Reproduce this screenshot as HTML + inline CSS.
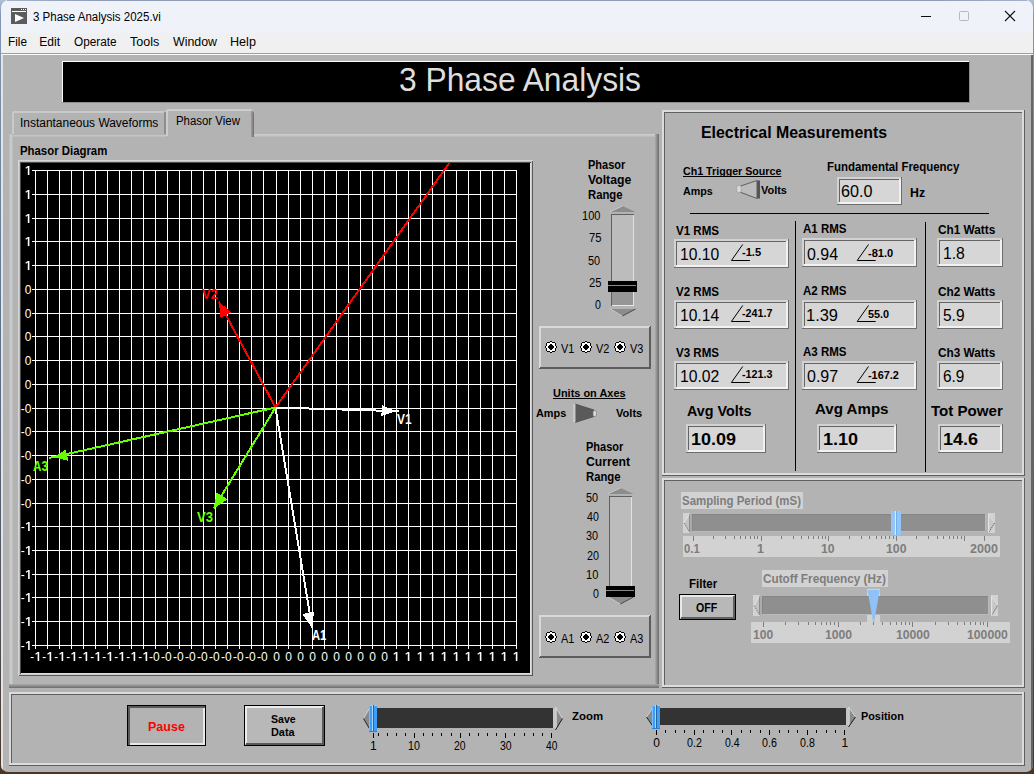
<!DOCTYPE html>
<html><head><meta charset="utf-8"><title>3 Phase Analysis 2025.vi</title>
<style>
html,body{margin:0;padding:0;}
body{width:1034px;height:774px;overflow:hidden;position:relative;background:linear-gradient(180deg,#b0bfd9 0%,#8496b6 2%,#5f7595 40%,#4f5058 80%,#4a3526 100%);font-family:"Liberation Sans",sans-serif;}
.t{position:absolute;white-space:nowrap;transform-origin:0 0;}
#win{position:absolute;left:1px;top:0;width:1032px;height:772px;background:#b3b3b3;border-radius:8px 8px 7px 7px;overflow:hidden;}
svg{position:absolute;left:0;top:0;overflow:visible;}
</style></head><body>
<div id="win"><div style="position:absolute;left:0;top:55px;width:2px;height:717px;background:#e4e4e4"></div><div style="position:absolute;left:1030px;top:55px;width:2px;height:717px;background:#666"></div></div>
<div id="root" style="position:absolute;left:0;top:0;width:1034px;height:774px;">

<div style="position:absolute;left:1px;top:0px;width:1032px;height:33px;background:#eff2f9;border-radius:8px 8px 0 0;"></div>
<div style="position:absolute;left:1px;top:33px;width:1032px;height:21px;background:#f0f0f0;"></div>
<div style="position:absolute;left:7px;top:0px;width:1020px;height:1px;background:linear-gradient(90deg,#a3b1cb,#8d9bb5 10%,#8d9bb5 90%,#a3b1cb);"></div>
<div style="position:absolute;left:1px;top:54px;width:1032px;height:1px;background:#fafafa;"></div>
<div style="position:absolute;left:1px;top:53px;width:1032px;height:1px;background:#a0a0a0;"></div>
<svg width="1034" height="774" viewBox="0 0 1034 774">
<rect x="11" y="8" width="16" height="16" fill="#5b5b5b"/>
<rect x="12" y="11" width="14" height="1" fill="#fff"/>
<rect x="21" y="9" width="1" height="1" fill="#fff"/><rect x="23" y="9" width="1" height="1" fill="#fff"/><rect x="25" y="9" width="1" height="1" fill="#fff"/>
<polygon points="15,14 15,22 24,18" fill="#fff"/>
<path d="M921 16.5h10" stroke="#111" stroke-width="1"/>
<rect x="959.5" y="11.5" width="9" height="9" rx="1" fill="none" stroke="#b8b8bc" stroke-width="1"/>
<path d="M1005 11l10 10M1015 11l-10 10" stroke="#111" stroke-width="1.1"/>
</svg>
<div class="t" style="left:32.67px;top:11px;font-size:12px;line-height:12px;color:#000;transform:scaleX(0.9587);">3 Phase Analysis 2025.vi</div>
<div class="t" style="left:8.36px;top:36px;font-size:12px;line-height:12px;color:#000;transform:scaleX(0.9812);">File</div>
<div class="t" style="left:39.35px;top:36px;font-size:12px;line-height:12px;color:#000;">Edit</div>
<div class="t" style="left:73.76px;top:36px;font-size:12px;line-height:12px;color:#000;transform:scaleX(0.9824);">Operate</div>
<div class="t" style="left:129.97px;top:36px;font-size:12px;line-height:12px;color:#000;transform:scaleX(1.0448);">Tools</div>
<div class="t" style="left:172.84px;top:36px;font-size:12px;line-height:12px;color:#000;transform:scaleX(1.0321);">Window</div>
<div class="t" style="left:230.31px;top:36px;font-size:12px;line-height:12px;color:#000;transform:scaleX(1.0497);">Help</div>
<div style="position:absolute;left:62px;top:61px;width:908px;height:42px;background:#8c8c8c;"></div>
<div style="position:absolute;left:62px;top:61px;width:907px;height:41px;background:#fcfcfc;"></div>
<div style="position:absolute;left:63px;top:62px;width:906px;height:40px;background:#000;"></div>
<div class="t" style="left:399.22px;top:63px;font-size:33px;line-height:33px;color:#dedede;transform:scaleX(0.9629);">3 Phase Analysis</div>
<div style="position:absolute;left:9px;top:134px;width:650px;height:554px;background:#b3b3b3;"></div>
<div style="position:absolute;left:9px;top:134px;width:650px;height:3px;background:linear-gradient(180deg,#d0d0d0,#c4c4c4 60%,#b9b9b9);"></div>
<div style="position:absolute;left:9px;top:134px;width:4px;height:551px;background:linear-gradient(90deg,#b9b9b9,#cbcbcb 40%,#c6c6c6 75%,#b6b6b6);"></div>
<div style="position:absolute;left:655px;top:134px;width:4px;height:554px;background:linear-gradient(90deg,#acacac,#6c6c6c);"></div>
<div style="position:absolute;left:9px;top:684px;width:650px;height:4px;background:linear-gradient(180deg,#acacac,#6c6c6c);"></div>
<div style="position:absolute;left:12px;top:111px;width:154px;height:24px;background:#b3b3b3;border-radius:3px 3px 0 0;"></div>
<div style="position:absolute;left:12px;top:111px;width:154px;height:2px;background:#c9c9c9;border-radius:3px 3px 0 0;"></div>
<div style="position:absolute;left:12px;top:112px;width:2px;height:22px;background:#c9c9c9;"></div>
<div style="position:absolute;left:164px;top:112px;width:2px;height:22px;background:#8e8e8e;"></div>
<div style="position:absolute;left:166px;top:109px;width:88px;height:28px;background:#b3b3b3;border-radius:3px 3px 0 0;"></div>
<div style="position:absolute;left:166px;top:109px;width:86px;height:2px;background:#cdcdcd;border-radius:3px 0 0 0;"></div>
<div style="position:absolute;left:166px;top:110px;width:2px;height:26px;background:#cdcdcd;"></div>
<div style="position:absolute;left:251px;top:111px;width:3px;height:26px;background:linear-gradient(90deg,#a0a0a0,#6e6e6e);border-radius:0 3px 0 0;"></div>
<div class="t" style="left:19.52px;top:117px;font-size:12px;line-height:12px;color:#000;transform:scaleX(0.9956);">Instantaneous Waveforms</div>
<div class="t" style="left:175.78px;top:115px;font-size:12px;line-height:12px;color:#000;transform:scaleX(0.9513);">Phasor View</div>
<div class="t" style="left:19.59px;top:145px;font-size:12px;line-height:12px;color:#000;font-weight:bold;transform:scaleX(0.9484);">Phasor Diagram</div>
<div style="position:absolute;left:18px;top:160px;width:515px;height:516px;background:#000;"></div>
<div style="position:absolute;left:18px;top:160px;width:515px;height:1px;background:#d6d6d6"></div>
<div style="position:absolute;left:18px;top:161px;width:515px;height:1px;background:#bdbdbd"></div>
<div style="position:absolute;left:18px;top:162px;width:515px;height:1px;background:#4c4c4c"></div>
<div style="position:absolute;left:18px;top:160px;width:1px;height:516px;background:#d6d6d6"></div>
<div style="position:absolute;left:19px;top:161px;width:1px;height:515px;background:#bdbdbd"></div>
<div style="position:absolute;left:20px;top:162px;width:1px;height:514px;background:#4c4c4c"></div>
<div style="position:absolute;left:530px;top:163px;width:1px;height:513px;background:#e0e0e0"></div>
<div style="position:absolute;left:531px;top:162px;width:1px;height:514px;background:#cacaca"></div>
<div style="position:absolute;left:532px;top:161px;width:1px;height:515px;background:#5a5a5a"></div>
<div style="position:absolute;left:21px;top:673px;width:510px;height:1px;background:#e0e0e0"></div>
<div style="position:absolute;left:20px;top:674px;width:512px;height:1px;background:#cacaca"></div>
<div style="position:absolute;left:19px;top:675px;width:514px;height:1px;background:#5a5a5a"></div>
<svg width="1034" height="774" viewBox="0 0 1034 774" shape-rendering="crispEdges"><path d="M35.5 170V649M47.5 170V649M59.5 170V649M71.5 170V649M83.5 170V649M95.5 170V649M107.5 170V649M119.5 170V649M131.5 170V649M143.5 170V649M155.5 170V649M167.5 170V649M179.5 170V649M191.5 170V649M203.5 170V649M215.5 170V649M227.5 170V649M239.5 170V649M251.5 170V649M263.5 170V649M276.5 170V649M288.5 170V649M300.5 170V649M312.5 170V649M324.5 170V649M336.5 170V649M348.5 170V649M360.5 170V649M372.5 170V649M384.5 170V649M396.5 170V649M408.5 170V649M420.5 170V649M432.5 170V649M444.5 170V649M456.5 170V649M468.5 170V649M480.5 170V649M492.5 170V649M504.5 170V649M516.5 170V649M32 170.5H517M32 194.5H517M32 218.5H517M32 241.5H517M32 265.5H517M32 289.5H517M32 313.5H517M32 336.5H517M32 360.5H517M32 384.5H517M32 408.5H517M32 431.5H517M32 455.5H517M32 479.5H517M32 503.5H517M32 526.5H517M32 550.5H517M32 574.5H517M32 597.5H517M32 621.5H517M32 645.5H517" stroke="#fff" stroke-width="1" fill="none"/><clipPath id="pc"><rect x="21" y="163" width="509" height="510"/></clipPath><g clip-path="url(#pc)"><line x1="275.5" y1="407.5" x2="501.44000000000005" y2="89.64999999999998" stroke="#ff0000" stroke-width="2"/><line x1="275.5" y1="407.5" x2="218.7" y2="301.5" stroke="#ff0000" stroke-width="2"/><polygon points="218.7,301.5 231.3,312.3 220.7,318.0" fill="#ff0000"/><line x1="275.5" y1="407.5" x2="398.6" y2="411.2" stroke="#ffffff" stroke-width="2"/><polygon points="396.1,411.1 381.4,416.2 381.8,405.2" fill="#ffffff"/><line x1="275.5" y1="407.5" x2="312.1" y2="628" stroke="#ffffff" stroke-width="2"/><polygon points="312.1,628.0 302.2,613.9 314.0,612.0" fill="#ffffff"/><line x1="275.5" y1="407.5" x2="49.2" y2="458" stroke="#66ff00" stroke-width="2"/><polygon points="53.1,457.1 65.8,449.7 68.3,460.9" fill="#66ff00"/><line x1="275.5" y1="407.5" x2="213.7" y2="508.4" stroke="#66ff00" stroke-width="2"/><polygon points="213.7,508.4 216.6,492.6 227.5,499.3" fill="#66ff00"/></g></svg>
<div class="t" style="left:202.35px;top:287px;font-size:14px;line-height:14px;color:#ff0000;font-weight:bold;transform:scaleX(0.9310);">V2</div>
<div class="t" style="left:397.35px;top:412px;font-size:14px;line-height:14px;color:#ffffff;font-weight:bold;transform:scaleX(0.8486);">V1</div>
<div class="t" style="left:311.53px;top:628px;font-size:14px;line-height:14px;color:#ffffff;font-weight:bold;transform:scaleX(0.7997);">A1</div>
<div class="t" style="left:33.42px;top:459px;font-size:14px;line-height:14px;color:#66ff00;font-weight:bold;transform:scaleX(0.8400);">A3</div>
<div class="t" style="left:197.44px;top:510px;font-size:14px;line-height:14px;color:#66ff00;font-weight:bold;transform:scaleX(0.9369);">V3</div>
<div class="t" style="left:24.67px;top:284px;font-size:12px;line-height:12px;color:#fff;">0</div>
<div class="t" style="left:24.67px;top:308px;font-size:12px;line-height:12px;color:#fff;">0</div>
<div class="t" style="left:24.67px;top:331px;font-size:12px;line-height:12px;color:#fff;">0</div>
<div class="t" style="left:24.67px;top:355px;font-size:12px;line-height:12px;color:#fff;">0</div>
<div class="t" style="left:24.67px;top:379px;font-size:12px;line-height:12px;color:#fff;">0</div>
<div class="t" style="left:20.67px;top:403px;font-size:12px;line-height:12px;color:#fff;">-0</div>
<div class="t" style="left:20.67px;top:426px;font-size:12px;line-height:12px;color:#fff;">-0</div>
<div class="t" style="left:20.67px;top:450px;font-size:12px;line-height:12px;color:#fff;">-0</div>
<div class="t" style="left:20.67px;top:474px;font-size:12px;line-height:12px;color:#fff;">-0</div>
<div class="t" style="left:20.67px;top:498px;font-size:12px;line-height:12px;color:#fff;">-0</div>
<div class="t" style="left:149.11px;top:651px;font-size:12px;line-height:12px;color:#fff;">-0</div>
<div class="t" style="left:161.11px;top:651px;font-size:12px;line-height:12px;color:#fff;">-0</div>
<div class="t" style="left:173.11px;top:651px;font-size:12px;line-height:12px;color:#fff;">-0</div>
<div class="t" style="left:185.11px;top:651px;font-size:12px;line-height:12px;color:#fff;">-0</div>
<div class="t" style="left:197.11px;top:651px;font-size:12px;line-height:12px;color:#fff;">-0</div>
<div class="t" style="left:209.11px;top:651px;font-size:12px;line-height:12px;color:#fff;">-0</div>
<div class="t" style="left:221.11px;top:651px;font-size:12px;line-height:12px;color:#fff;">-0</div>
<div class="t" style="left:233.11px;top:651px;font-size:12px;line-height:12px;color:#fff;">-0</div>
<div class="t" style="left:245.11px;top:651px;font-size:12px;line-height:12px;color:#fff;">-0</div>
<div class="t" style="left:257.11px;top:651px;font-size:12px;line-height:12px;color:#fff;">-0</div>
<div class="t" style="left:273.13px;top:651px;font-size:12px;line-height:12px;color:#fff;">0</div>
<div class="t" style="left:285.13px;top:651px;font-size:12px;line-height:12px;color:#fff;">0</div>
<div class="t" style="left:297.13px;top:651px;font-size:12px;line-height:12px;color:#fff;">0</div>
<div class="t" style="left:309.13px;top:651px;font-size:12px;line-height:12px;color:#fff;">0</div>
<div class="t" style="left:321.13px;top:651px;font-size:12px;line-height:12px;color:#fff;">0</div>
<div class="t" style="left:333.13px;top:651px;font-size:12px;line-height:12px;color:#fff;">0</div>
<div class="t" style="left:345.13px;top:651px;font-size:12px;line-height:12px;color:#fff;">0</div>
<div class="t" style="left:357.13px;top:651px;font-size:12px;line-height:12px;color:#fff;">0</div>
<div class="t" style="left:369.13px;top:651px;font-size:12px;line-height:12px;color:#fff;">0</div>
<div class="t" style="left:381.13px;top:651px;font-size:12px;line-height:12px;color:#fff;">0</div>
<svg width="1034" height="774" viewBox="0 0 1034 774" fill="#fff"><rect x="27.80" y="166" width="1.6" height="9"/><path d="M25.70 168.3L28.30 166.5" stroke="#fff" stroke-width="1.1" fill="none"/><rect x="27.80" y="190" width="1.6" height="9"/><path d="M25.70 192.3L28.30 190.5" stroke="#fff" stroke-width="1.1" fill="none"/><rect x="27.80" y="214" width="1.6" height="9"/><path d="M25.70 216.3L28.30 214.5" stroke="#fff" stroke-width="1.1" fill="none"/><rect x="27.80" y="237" width="1.6" height="9"/><path d="M25.70 239.3L28.30 237.5" stroke="#fff" stroke-width="1.1" fill="none"/><rect x="27.80" y="261" width="1.6" height="9"/><path d="M25.70 263.3L28.30 261.5" stroke="#fff" stroke-width="1.1" fill="none"/><rect x="28.10" y="522" width="1.6" height="9"/><path d="M26.00 524.3L28.60 522.5" stroke="#fff" stroke-width="1.1" fill="none"/><rect x="21.30" y="527" width="3" height="1.1"/><rect x="28.10" y="546" width="1.6" height="9"/><path d="M26.00 548.3L28.60 546.5" stroke="#fff" stroke-width="1.1" fill="none"/><rect x="21.30" y="551" width="3" height="1.1"/><rect x="28.10" y="570" width="1.6" height="9"/><path d="M26.00 572.3L28.60 570.5" stroke="#fff" stroke-width="1.1" fill="none"/><rect x="21.30" y="575" width="3" height="1.1"/><rect x="28.10" y="593" width="1.6" height="9"/><path d="M26.00 595.3L28.60 593.5" stroke="#fff" stroke-width="1.1" fill="none"/><rect x="21.30" y="598" width="3" height="1.1"/><rect x="28.10" y="617" width="1.6" height="9"/><path d="M26.00 619.3L28.60 617.5" stroke="#fff" stroke-width="1.1" fill="none"/><rect x="21.30" y="622" width="3" height="1.1"/><rect x="28.10" y="641" width="1.6" height="9"/><path d="M26.00 643.3L28.60 641.5" stroke="#fff" stroke-width="1.1" fill="none"/><rect x="21.30" y="646" width="3" height="1.1"/><rect x="37.60" y="652" width="1.6" height="9"/><path d="M35.50 654.3L38.10 652.5" stroke="#fff" stroke-width="1.1" fill="none"/><rect x="30.70" y="657" width="3" height="1.1"/><rect x="49.60" y="652" width="1.6" height="9"/><path d="M47.50 654.3L50.10 652.5" stroke="#fff" stroke-width="1.1" fill="none"/><rect x="42.70" y="657" width="3" height="1.1"/><rect x="61.60" y="652" width="1.6" height="9"/><path d="M59.50 654.3L62.10 652.5" stroke="#fff" stroke-width="1.1" fill="none"/><rect x="54.70" y="657" width="3" height="1.1"/><rect x="73.60" y="652" width="1.6" height="9"/><path d="M71.50 654.3L74.10 652.5" stroke="#fff" stroke-width="1.1" fill="none"/><rect x="66.70" y="657" width="3" height="1.1"/><rect x="85.60" y="652" width="1.6" height="9"/><path d="M83.50 654.3L86.10 652.5" stroke="#fff" stroke-width="1.1" fill="none"/><rect x="78.70" y="657" width="3" height="1.1"/><rect x="97.60" y="652" width="1.6" height="9"/><path d="M95.50 654.3L98.10 652.5" stroke="#fff" stroke-width="1.1" fill="none"/><rect x="90.70" y="657" width="3" height="1.1"/><rect x="109.60" y="652" width="1.6" height="9"/><path d="M107.50 654.3L110.10 652.5" stroke="#fff" stroke-width="1.1" fill="none"/><rect x="102.70" y="657" width="3" height="1.1"/><rect x="121.60" y="652" width="1.6" height="9"/><path d="M119.50 654.3L122.10 652.5" stroke="#fff" stroke-width="1.1" fill="none"/><rect x="114.70" y="657" width="3" height="1.1"/><rect x="133.60" y="652" width="1.6" height="9"/><path d="M131.50 654.3L134.10 652.5" stroke="#fff" stroke-width="1.1" fill="none"/><rect x="126.70" y="657" width="3" height="1.1"/><rect x="145.60" y="652" width="1.6" height="9"/><path d="M143.50 654.3L146.10 652.5" stroke="#fff" stroke-width="1.1" fill="none"/><rect x="138.70" y="657" width="3" height="1.1"/><rect x="395.80" y="652" width="1.6" height="9"/><path d="M393.70 654.3L396.30 652.5" stroke="#fff" stroke-width="1.1" fill="none"/><rect x="407.80" y="652" width="1.6" height="9"/><path d="M405.70 654.3L408.30 652.5" stroke="#fff" stroke-width="1.1" fill="none"/><rect x="419.80" y="652" width="1.6" height="9"/><path d="M417.70 654.3L420.30 652.5" stroke="#fff" stroke-width="1.1" fill="none"/><rect x="431.80" y="652" width="1.6" height="9"/><path d="M429.70 654.3L432.30 652.5" stroke="#fff" stroke-width="1.1" fill="none"/><rect x="443.80" y="652" width="1.6" height="9"/><path d="M441.70 654.3L444.30 652.5" stroke="#fff" stroke-width="1.1" fill="none"/><rect x="455.80" y="652" width="1.6" height="9"/><path d="M453.70 654.3L456.30 652.5" stroke="#fff" stroke-width="1.1" fill="none"/><rect x="467.80" y="652" width="1.6" height="9"/><path d="M465.70 654.3L468.30 652.5" stroke="#fff" stroke-width="1.1" fill="none"/><rect x="479.80" y="652" width="1.6" height="9"/><path d="M477.70 654.3L480.30 652.5" stroke="#fff" stroke-width="1.1" fill="none"/><rect x="491.80" y="652" width="1.6" height="9"/><path d="M489.70 654.3L492.30 652.5" stroke="#fff" stroke-width="1.1" fill="none"/><rect x="503.80" y="652" width="1.6" height="9"/><path d="M501.70 654.3L504.30 652.5" stroke="#fff" stroke-width="1.1" fill="none"/><rect x="515.80" y="652" width="1.6" height="9"/><path d="M513.70 654.3L516.30 652.5" stroke="#fff" stroke-width="1.1" fill="none"/></svg>
<div class="t" style="left:587.60px;top:159px;font-size:12px;line-height:12px;color:#000;font-weight:bold;transform:scaleX(0.9170);">Phasor</div>
<div class="t" style="left:587.97px;top:174px;font-size:12px;line-height:12px;color:#000;font-weight:bold;transform:scaleX(1.0169);">Voltage</div>
<div class="t" style="left:587.59px;top:189px;font-size:12px;line-height:12px;color:#000;font-weight:bold;transform:scaleX(0.9411);">Range</div>
<svg width="1034" height="774" viewBox="0 0 1034 774"><polygon points="622.5,206 635.5,212 609.5,212" fill="#8c8c8c"/><path d="M609.5 212L622.5 206" stroke="#c8c8c8" stroke-width="1" fill="none"/><polygon points="610.5,309 635.5,309 622.5,316" fill="#8c8c8c"/><path d="M635.5 309L622.5 316" stroke="#4a4a4a" stroke-width="1" fill="none"/><path d="M609.5 308.5L622.0 316" stroke="#c9c9c9" stroke-width="1" fill="none"/></svg>
<div style="position:absolute;left:611px;top:214px;width:23px;height:92px;background:#bcbcbc;"></div>
<div style="position:absolute;left:611px;top:281px;width:23px;height:25px;background:#969696;"></div>
<div style="position:absolute;left:611px;top:214px;width:23px;height:1px;background:#606060"></div>
<div style="position:absolute;left:611px;top:214px;width:1px;height:92px;background:#606060"></div>
<div style="position:absolute;left:633px;top:215px;width:1px;height:91px;background:#e2e2e2"></div>
<div style="position:absolute;left:612px;top:305px;width:22px;height:1px;background:#e8e8e8"></div>
<div style="position:absolute;left:608px;top:281px;width:29px;height:11px;background:#000;"></div>
<div style="position:absolute;left:608px;top:285px;width:28px;height:1px;background:#8a8a8a;"></div>
<div class="t" style="left:582.36px;top:210px;font-size:12px;line-height:12px;color:#000;transform:scaleX(0.9200);">100</div>
<div class="t" style="left:588.54px;top:232px;font-size:12px;line-height:12px;color:#000;transform:scaleX(0.9332);">75</div>
<div class="t" style="left:588.46px;top:255px;font-size:12px;line-height:12px;color:#000;transform:scaleX(0.9063);">50</div>
<div class="t" style="left:588.54px;top:277px;font-size:12px;line-height:12px;color:#000;transform:scaleX(0.9332);">25</div>
<div class="t" style="left:594.71px;top:299px;font-size:12px;line-height:12px;color:#000;transform:scaleX(0.8864);">0</div>
<div class="t" style="left:585.60px;top:441px;font-size:12px;line-height:12px;color:#000;font-weight:bold;transform:scaleX(0.9170);">Phasor</div>
<div class="t" style="left:585.81px;top:456px;font-size:12px;line-height:12px;color:#000;font-weight:bold;transform:scaleX(1.0187);">Current</div>
<div class="t" style="left:585.59px;top:471px;font-size:12px;line-height:12px;color:#000;font-weight:bold;transform:scaleX(0.9411);">Range</div>
<svg width="1034" height="774" viewBox="0 0 1034 774"><polygon points="620.5,488 633.5,494 607.5,494" fill="#8c8c8c"/><path d="M607.5 494L620.5 488" stroke="#c8c8c8" stroke-width="1" fill="none"/><polygon points="608.5,597 633.5,597 620.5,604" fill="#8c8c8c"/><path d="M633.5 597L620.5 604" stroke="#4a4a4a" stroke-width="1" fill="none"/><path d="M607.5 596.5L620.0 604" stroke="#c9c9c9" stroke-width="1" fill="none"/></svg>
<div style="position:absolute;left:609px;top:496px;width:23px;height:98px;background:#bcbcbc;"></div>
<div style="position:absolute;left:609px;top:586px;width:23px;height:8px;background:#969696;"></div>
<div style="position:absolute;left:609px;top:496px;width:23px;height:1px;background:#606060"></div>
<div style="position:absolute;left:609px;top:496px;width:1px;height:98px;background:#606060"></div>
<div style="position:absolute;left:631px;top:497px;width:1px;height:97px;background:#e2e2e2"></div>
<div style="position:absolute;left:610px;top:593px;width:22px;height:1px;background:#e8e8e8"></div>
<div style="position:absolute;left:606px;top:586px;width:29px;height:11px;background:#000;"></div>
<div style="position:absolute;left:606px;top:590px;width:28px;height:1px;background:#8a8a8a;"></div>
<div class="t" style="left:586.46px;top:492px;font-size:12px;line-height:12px;color:#000;transform:scaleX(0.9063);">50</div>
<div class="t" style="left:586.78px;top:511px;font-size:12px;line-height:12px;color:#000;transform:scaleX(0.8827);">40</div>
<div class="t" style="left:586.49px;top:530px;font-size:12px;line-height:12px;color:#000;transform:scaleX(0.9041);">30</div>
<div class="t" style="left:586.55px;top:550px;font-size:12px;line-height:12px;color:#000;transform:scaleX(0.8997);">20</div>
<div class="t" style="left:586.25px;top:569px;font-size:12px;line-height:12px;color:#000;transform:scaleX(0.9220);">10</div>
<div class="t" style="left:592.71px;top:588px;font-size:12px;line-height:12px;color:#000;transform:scaleX(0.8864);">0</div>
<div style="position:absolute;left:539px;top:326px;width:112px;height:43px;background:#b3b3b3"></div>
<div style="position:absolute;left:539px;top:326px;width:111px;height:2px;background:#d9d9d9"></div>
<div style="position:absolute;left:539px;top:326px;width:2px;height:42px;background:#d9d9d9"></div>
<div style="position:absolute;left:540px;top:367px;width:111px;height:2px;background:#5c5c5c"></div>
<div style="position:absolute;left:649px;top:327px;width:2px;height:42px;background:#5c5c5c"></div>
<div style="position:absolute;left:539px;top:368px;width:1px;height:1px;background:#5c5c5c"></div>
<div style="position:absolute;left:650px;top:326px;width:1px;height:1px;background:#5c5c5c"></div>
<svg width="1034" height="774" viewBox="0 0 1034 774" shape-rendering="crispEdges"><rect x="550" y="342" width="2" height="1" fill="#fff"/><rect x="547" y="343" width="8" height="1" fill="#fff"/><rect x="547" y="344" width="8" height="1" fill="#fff"/><rect x="547" y="345" width="8" height="1" fill="#fff"/><rect x="546" y="346" width="10" height="1" fill="#fff"/><rect x="546" y="347" width="10" height="1" fill="#fff"/><rect x="547" y="348" width="8" height="1" fill="#fff"/><rect x="547" y="349" width="8" height="1" fill="#fff"/><rect x="547" y="350" width="8" height="1" fill="#fff"/><rect x="550" y="351" width="2" height="1" fill="#fff"/><rect x="550" y="341" width="2" height="1" fill="#000"/><rect x="547" y="342" width="3" height="1" fill="#000"/><rect x="552" y="342" width="3" height="1" fill="#000"/><rect x="546" y="343" width="1" height="1" fill="#000"/><rect x="555" y="343" width="1" height="1" fill="#000"/><rect x="546" y="344" width="1" height="1" fill="#000"/><rect x="555" y="344" width="1" height="1" fill="#000"/><rect x="546" y="345" width="1" height="1" fill="#000"/><rect x="555" y="345" width="1" height="1" fill="#000"/><rect x="545" y="346" width="1" height="1" fill="#000"/><rect x="556" y="346" width="1" height="1" fill="#000"/><rect x="545" y="347" width="1" height="1" fill="#000"/><rect x="556" y="347" width="1" height="1" fill="#000"/><rect x="546" y="348" width="1" height="1" fill="#000"/><rect x="555" y="348" width="1" height="1" fill="#000"/><rect x="546" y="349" width="1" height="1" fill="#000"/><rect x="555" y="349" width="1" height="1" fill="#000"/><rect x="546" y="350" width="1" height="1" fill="#000"/><rect x="555" y="350" width="1" height="1" fill="#000"/><rect x="547" y="351" width="3" height="1" fill="#000"/><rect x="552" y="351" width="3" height="1" fill="#000"/><rect x="550" y="352" width="2" height="1" fill="#000"/><rect x="550" y="344" width="2" height="1" fill="#000"/><rect x="549" y="345" width="4" height="1" fill="#000"/><rect x="548" y="346" width="6" height="1" fill="#000"/><rect x="548" y="347" width="6" height="1" fill="#000"/><rect x="549" y="348" width="4" height="1" fill="#000"/><rect x="550" y="349" width="2" height="1" fill="#000"/><rect x="585" y="342" width="2" height="1" fill="#fff"/><rect x="582" y="343" width="8" height="1" fill="#fff"/><rect x="582" y="344" width="8" height="1" fill="#fff"/><rect x="582" y="345" width="8" height="1" fill="#fff"/><rect x="581" y="346" width="10" height="1" fill="#fff"/><rect x="581" y="347" width="10" height="1" fill="#fff"/><rect x="582" y="348" width="8" height="1" fill="#fff"/><rect x="582" y="349" width="8" height="1" fill="#fff"/><rect x="582" y="350" width="8" height="1" fill="#fff"/><rect x="585" y="351" width="2" height="1" fill="#fff"/><rect x="585" y="341" width="2" height="1" fill="#000"/><rect x="582" y="342" width="3" height="1" fill="#000"/><rect x="587" y="342" width="3" height="1" fill="#000"/><rect x="581" y="343" width="1" height="1" fill="#000"/><rect x="590" y="343" width="1" height="1" fill="#000"/><rect x="581" y="344" width="1" height="1" fill="#000"/><rect x="590" y="344" width="1" height="1" fill="#000"/><rect x="581" y="345" width="1" height="1" fill="#000"/><rect x="590" y="345" width="1" height="1" fill="#000"/><rect x="580" y="346" width="1" height="1" fill="#000"/><rect x="591" y="346" width="1" height="1" fill="#000"/><rect x="580" y="347" width="1" height="1" fill="#000"/><rect x="591" y="347" width="1" height="1" fill="#000"/><rect x="581" y="348" width="1" height="1" fill="#000"/><rect x="590" y="348" width="1" height="1" fill="#000"/><rect x="581" y="349" width="1" height="1" fill="#000"/><rect x="590" y="349" width="1" height="1" fill="#000"/><rect x="581" y="350" width="1" height="1" fill="#000"/><rect x="590" y="350" width="1" height="1" fill="#000"/><rect x="582" y="351" width="3" height="1" fill="#000"/><rect x="587" y="351" width="3" height="1" fill="#000"/><rect x="585" y="352" width="2" height="1" fill="#000"/><rect x="585" y="344" width="2" height="1" fill="#000"/><rect x="584" y="345" width="4" height="1" fill="#000"/><rect x="583" y="346" width="6" height="1" fill="#000"/><rect x="583" y="347" width="6" height="1" fill="#000"/><rect x="584" y="348" width="4" height="1" fill="#000"/><rect x="585" y="349" width="2" height="1" fill="#000"/><rect x="619" y="342" width="2" height="1" fill="#fff"/><rect x="616" y="343" width="8" height="1" fill="#fff"/><rect x="616" y="344" width="8" height="1" fill="#fff"/><rect x="616" y="345" width="8" height="1" fill="#fff"/><rect x="615" y="346" width="10" height="1" fill="#fff"/><rect x="615" y="347" width="10" height="1" fill="#fff"/><rect x="616" y="348" width="8" height="1" fill="#fff"/><rect x="616" y="349" width="8" height="1" fill="#fff"/><rect x="616" y="350" width="8" height="1" fill="#fff"/><rect x="619" y="351" width="2" height="1" fill="#fff"/><rect x="619" y="341" width="2" height="1" fill="#000"/><rect x="616" y="342" width="3" height="1" fill="#000"/><rect x="621" y="342" width="3" height="1" fill="#000"/><rect x="615" y="343" width="1" height="1" fill="#000"/><rect x="624" y="343" width="1" height="1" fill="#000"/><rect x="615" y="344" width="1" height="1" fill="#000"/><rect x="624" y="344" width="1" height="1" fill="#000"/><rect x="615" y="345" width="1" height="1" fill="#000"/><rect x="624" y="345" width="1" height="1" fill="#000"/><rect x="614" y="346" width="1" height="1" fill="#000"/><rect x="625" y="346" width="1" height="1" fill="#000"/><rect x="614" y="347" width="1" height="1" fill="#000"/><rect x="625" y="347" width="1" height="1" fill="#000"/><rect x="615" y="348" width="1" height="1" fill="#000"/><rect x="624" y="348" width="1" height="1" fill="#000"/><rect x="615" y="349" width="1" height="1" fill="#000"/><rect x="624" y="349" width="1" height="1" fill="#000"/><rect x="615" y="350" width="1" height="1" fill="#000"/><rect x="624" y="350" width="1" height="1" fill="#000"/><rect x="616" y="351" width="3" height="1" fill="#000"/><rect x="621" y="351" width="3" height="1" fill="#000"/><rect x="619" y="352" width="2" height="1" fill="#000"/><rect x="619" y="344" width="2" height="1" fill="#000"/><rect x="618" y="345" width="4" height="1" fill="#000"/><rect x="617" y="346" width="6" height="1" fill="#000"/><rect x="617" y="347" width="6" height="1" fill="#000"/><rect x="618" y="348" width="4" height="1" fill="#000"/><rect x="619" y="349" width="2" height="1" fill="#000"/></svg>
<div class="t" style="left:560.89px;top:343px;font-size:12px;line-height:12px;color:#000;transform:scaleX(0.9080);">V1</div>
<div class="t" style="left:595.89px;top:343px;font-size:12px;line-height:12px;color:#000;transform:scaleX(0.9100);">V2</div>
<div class="t" style="left:630.19px;top:343px;font-size:12px;line-height:12px;color:#000;transform:scaleX(0.9080);">V3</div>
<div style="position:absolute;left:539px;top:615px;width:112px;height:43px;background:#b3b3b3"></div>
<div style="position:absolute;left:539px;top:615px;width:111px;height:2px;background:#d9d9d9"></div>
<div style="position:absolute;left:539px;top:615px;width:2px;height:42px;background:#d9d9d9"></div>
<div style="position:absolute;left:540px;top:656px;width:111px;height:2px;background:#5c5c5c"></div>
<div style="position:absolute;left:649px;top:616px;width:2px;height:42px;background:#5c5c5c"></div>
<div style="position:absolute;left:539px;top:657px;width:1px;height:1px;background:#5c5c5c"></div>
<div style="position:absolute;left:650px;top:615px;width:1px;height:1px;background:#5c5c5c"></div>
<svg width="1034" height="774" viewBox="0 0 1034 774" shape-rendering="crispEdges"><rect x="550" y="632" width="2" height="1" fill="#fff"/><rect x="547" y="633" width="8" height="1" fill="#fff"/><rect x="547" y="634" width="8" height="1" fill="#fff"/><rect x="547" y="635" width="8" height="1" fill="#fff"/><rect x="546" y="636" width="10" height="1" fill="#fff"/><rect x="546" y="637" width="10" height="1" fill="#fff"/><rect x="547" y="638" width="8" height="1" fill="#fff"/><rect x="547" y="639" width="8" height="1" fill="#fff"/><rect x="547" y="640" width="8" height="1" fill="#fff"/><rect x="550" y="641" width="2" height="1" fill="#fff"/><rect x="550" y="631" width="2" height="1" fill="#000"/><rect x="547" y="632" width="3" height="1" fill="#000"/><rect x="552" y="632" width="3" height="1" fill="#000"/><rect x="546" y="633" width="1" height="1" fill="#000"/><rect x="555" y="633" width="1" height="1" fill="#000"/><rect x="546" y="634" width="1" height="1" fill="#000"/><rect x="555" y="634" width="1" height="1" fill="#000"/><rect x="546" y="635" width="1" height="1" fill="#000"/><rect x="555" y="635" width="1" height="1" fill="#000"/><rect x="545" y="636" width="1" height="1" fill="#000"/><rect x="556" y="636" width="1" height="1" fill="#000"/><rect x="545" y="637" width="1" height="1" fill="#000"/><rect x="556" y="637" width="1" height="1" fill="#000"/><rect x="546" y="638" width="1" height="1" fill="#000"/><rect x="555" y="638" width="1" height="1" fill="#000"/><rect x="546" y="639" width="1" height="1" fill="#000"/><rect x="555" y="639" width="1" height="1" fill="#000"/><rect x="546" y="640" width="1" height="1" fill="#000"/><rect x="555" y="640" width="1" height="1" fill="#000"/><rect x="547" y="641" width="3" height="1" fill="#000"/><rect x="552" y="641" width="3" height="1" fill="#000"/><rect x="550" y="642" width="2" height="1" fill="#000"/><rect x="550" y="634" width="2" height="1" fill="#000"/><rect x="549" y="635" width="4" height="1" fill="#000"/><rect x="548" y="636" width="6" height="1" fill="#000"/><rect x="548" y="637" width="6" height="1" fill="#000"/><rect x="549" y="638" width="4" height="1" fill="#000"/><rect x="550" y="639" width="2" height="1" fill="#000"/><rect x="585" y="632" width="2" height="1" fill="#fff"/><rect x="582" y="633" width="8" height="1" fill="#fff"/><rect x="582" y="634" width="8" height="1" fill="#fff"/><rect x="582" y="635" width="8" height="1" fill="#fff"/><rect x="581" y="636" width="10" height="1" fill="#fff"/><rect x="581" y="637" width="10" height="1" fill="#fff"/><rect x="582" y="638" width="8" height="1" fill="#fff"/><rect x="582" y="639" width="8" height="1" fill="#fff"/><rect x="582" y="640" width="8" height="1" fill="#fff"/><rect x="585" y="641" width="2" height="1" fill="#fff"/><rect x="585" y="631" width="2" height="1" fill="#000"/><rect x="582" y="632" width="3" height="1" fill="#000"/><rect x="587" y="632" width="3" height="1" fill="#000"/><rect x="581" y="633" width="1" height="1" fill="#000"/><rect x="590" y="633" width="1" height="1" fill="#000"/><rect x="581" y="634" width="1" height="1" fill="#000"/><rect x="590" y="634" width="1" height="1" fill="#000"/><rect x="581" y="635" width="1" height="1" fill="#000"/><rect x="590" y="635" width="1" height="1" fill="#000"/><rect x="580" y="636" width="1" height="1" fill="#000"/><rect x="591" y="636" width="1" height="1" fill="#000"/><rect x="580" y="637" width="1" height="1" fill="#000"/><rect x="591" y="637" width="1" height="1" fill="#000"/><rect x="581" y="638" width="1" height="1" fill="#000"/><rect x="590" y="638" width="1" height="1" fill="#000"/><rect x="581" y="639" width="1" height="1" fill="#000"/><rect x="590" y="639" width="1" height="1" fill="#000"/><rect x="581" y="640" width="1" height="1" fill="#000"/><rect x="590" y="640" width="1" height="1" fill="#000"/><rect x="582" y="641" width="3" height="1" fill="#000"/><rect x="587" y="641" width="3" height="1" fill="#000"/><rect x="585" y="642" width="2" height="1" fill="#000"/><rect x="585" y="634" width="2" height="1" fill="#000"/><rect x="584" y="635" width="4" height="1" fill="#000"/><rect x="583" y="636" width="6" height="1" fill="#000"/><rect x="583" y="637" width="6" height="1" fill="#000"/><rect x="584" y="638" width="4" height="1" fill="#000"/><rect x="585" y="639" width="2" height="1" fill="#000"/><rect x="619" y="632" width="2" height="1" fill="#fff"/><rect x="616" y="633" width="8" height="1" fill="#fff"/><rect x="616" y="634" width="8" height="1" fill="#fff"/><rect x="616" y="635" width="8" height="1" fill="#fff"/><rect x="615" y="636" width="10" height="1" fill="#fff"/><rect x="615" y="637" width="10" height="1" fill="#fff"/><rect x="616" y="638" width="8" height="1" fill="#fff"/><rect x="616" y="639" width="8" height="1" fill="#fff"/><rect x="616" y="640" width="8" height="1" fill="#fff"/><rect x="619" y="641" width="2" height="1" fill="#fff"/><rect x="619" y="631" width="2" height="1" fill="#000"/><rect x="616" y="632" width="3" height="1" fill="#000"/><rect x="621" y="632" width="3" height="1" fill="#000"/><rect x="615" y="633" width="1" height="1" fill="#000"/><rect x="624" y="633" width="1" height="1" fill="#000"/><rect x="615" y="634" width="1" height="1" fill="#000"/><rect x="624" y="634" width="1" height="1" fill="#000"/><rect x="615" y="635" width="1" height="1" fill="#000"/><rect x="624" y="635" width="1" height="1" fill="#000"/><rect x="614" y="636" width="1" height="1" fill="#000"/><rect x="625" y="636" width="1" height="1" fill="#000"/><rect x="614" y="637" width="1" height="1" fill="#000"/><rect x="625" y="637" width="1" height="1" fill="#000"/><rect x="615" y="638" width="1" height="1" fill="#000"/><rect x="624" y="638" width="1" height="1" fill="#000"/><rect x="615" y="639" width="1" height="1" fill="#000"/><rect x="624" y="639" width="1" height="1" fill="#000"/><rect x="615" y="640" width="1" height="1" fill="#000"/><rect x="624" y="640" width="1" height="1" fill="#000"/><rect x="616" y="641" width="3" height="1" fill="#000"/><rect x="621" y="641" width="3" height="1" fill="#000"/><rect x="619" y="642" width="2" height="1" fill="#000"/><rect x="619" y="634" width="2" height="1" fill="#000"/><rect x="618" y="635" width="4" height="1" fill="#000"/><rect x="617" y="636" width="6" height="1" fill="#000"/><rect x="617" y="637" width="6" height="1" fill="#000"/><rect x="618" y="638" width="4" height="1" fill="#000"/><rect x="619" y="639" width="2" height="1" fill="#000"/></svg>
<div class="t" style="left:560.86px;top:633px;font-size:12px;line-height:12px;color:#000;transform:scaleX(0.9100);">A1</div>
<div class="t" style="left:595.86px;top:633px;font-size:12px;line-height:12px;color:#000;transform:scaleX(0.9120);">A2</div>
<div class="t" style="left:630.16px;top:633px;font-size:12px;line-height:12px;color:#000;transform:scaleX(0.9100);">A3</div>
<div class="t" style="left:552.99px;top:388px;font-size:11px;line-height:11px;color:#000;font-weight:bold;transform:scaleX(0.9947);text-decoration:underline;text-decoration-skip-ink:none;text-underline-offset:1px;text-decoration-thickness:1px;">Units on Axes</div>
<div class="t" style="left:536.25px;top:408px;font-size:11px;line-height:11px;color:#000;font-weight:bold;transform:scaleX(0.9905);">Amps</div>
<div class="t" style="left:616.37px;top:408px;font-size:11px;line-height:11px;color:#000;font-weight:bold;transform:scaleX(1.0058);">Volts</div>
<svg width="1034" height="774" viewBox="0 0 1034 774">
<polygon points="575,404 575,422.5 594,416.5 594,410" fill="#5a5a5a" stroke="#4a4a4a" stroke-width="0.8"/>
<rect x="573" y="404" width="2.5" height="18.5" fill="#c9c9c9"/>
<rect x="593" y="410.5" width="3.5" height="6" rx="1.5" fill="#d6d6d6" stroke="#777" stroke-width="0.6"/>
</svg>
<div style="position:absolute;left:662px;top:110px;width:362px;height:2px;background:#dcdcdc"></div>
<div style="position:absolute;left:662px;top:110px;width:2px;height:365px;background:#dcdcdc"></div>
<div style="position:absolute;left:664px;top:112px;width:358px;height:1px;background:#5f5f5f"></div>
<div style="position:absolute;left:664px;top:112px;width:1px;height:361px;background:#5f5f5f"></div>
<div style="position:absolute;left:664px;top:473px;width:360px;height:2px;background:#dcdcdc"></div>
<div style="position:absolute;left:1022px;top:112px;width:2px;height:363px;background:#dcdcdc"></div>
<div style="position:absolute;left:662px;top:475px;width:363px;height:1px;background:#5f5f5f"></div>
<div style="position:absolute;left:1024px;top:110px;width:1px;height:366px;background:#5f5f5f"></div>
<div class="t" style="left:701.19px;top:125px;font-size:16px;line-height:16px;color:#000;font-weight:bold;transform:scaleX(0.9914);">Electrical Measurements</div>
<div class="t" style="left:682.85px;top:166px;font-size:11px;line-height:11px;color:#000;font-weight:bold;transform:scaleX(0.9691);text-decoration:underline;text-decoration-skip-ink:none;text-underline-offset:1px;text-decoration-thickness:1px;">Ch1 Trigger Source</div>
<div class="t" style="left:683.35px;top:186px;font-size:11px;line-height:11px;color:#000;font-weight:bold;transform:scaleX(0.9740);">Amps</div>
<div class="t" style="left:761.47px;top:185px;font-size:11px;line-height:11px;color:#000;font-weight:bold;transform:scaleX(0.9942);">Volts</div>
<svg width="1034" height="774" viewBox="0 0 1034 774">
<polygon points="740.5,186 757,180.5 757,198.5 740.5,192.3" fill="#bcbcbc" stroke="#555" stroke-width="0.9"/>
<rect x="757" y="180.5" width="3" height="18" fill="#555"/>
<rect x="736.7" y="185.5" width="4.5" height="7" rx="2" fill="#d8d8d8" stroke="#999" stroke-width="0.6"/>
</svg>
<div class="t" style="left:827.18px;top:161px;font-size:12px;line-height:12px;color:#000;font-weight:bold;transform:scaleX(0.9541);">Fundamental Frequency</div>
<div style="position:absolute;left:837px;top:177px;width:65px;height:28px;background:#d6d6d6;"></div>
<div style="position:absolute;left:837px;top:177px;width:65px;height:2px;background:#d2d2d2"></div>
<div style="position:absolute;left:837px;top:177px;width:2px;height:28px;background:#d2d2d2"></div>
<div style="position:absolute;left:839px;top:179px;width:61px;height:1px;background:#646464"></div>
<div style="position:absolute;left:839px;top:179px;width:1px;height:24px;background:#646464"></div>
<div style="position:absolute;left:839px;top:202px;width:62px;height:2px;background:#f2f2f2"></div>
<div style="position:absolute;left:899px;top:179px;width:2px;height:25px;background:#f2f2f2"></div>
<div style="position:absolute;left:837px;top:204px;width:65px;height:1px;background:#6e6e6e"></div>
<div style="position:absolute;left:901px;top:177px;width:1px;height:28px;background:#6e6e6e"></div>
<div class="t" style="left:840.93px;top:184px;font-size:16px;line-height:16px;color:#000;transform:scaleX(1.0083);">60.0</div>
<div class="t" style="left:909.95px;top:187px;font-size:12px;line-height:12px;color:#000;font-weight:bold;transform:scaleX(1.0265);">Hz</div>
<div style="position:absolute;left:690px;top:213px;width:299px;height:1px;background:#000"></div>
<div style="position:absolute;left:795px;top:221px;width:1px;height:250px;background:#000"></div>
<div style="position:absolute;left:925px;top:222px;width:1px;height:250px;background:#000"></div>
<div class="t" style="left:676.37px;top:225px;font-size:12px;line-height:12px;color:#000;font-weight:bold;transform:scaleX(0.9641);">V1 RMS</div>
<div style="position:absolute;left:674px;top:239px;width:115px;height:29px;background:#d6d6d6;"></div>
<div style="position:absolute;left:674px;top:239px;width:115px;height:2px;background:#d2d2d2"></div>
<div style="position:absolute;left:674px;top:239px;width:2px;height:29px;background:#d2d2d2"></div>
<div style="position:absolute;left:676px;top:241px;width:111px;height:1px;background:#646464"></div>
<div style="position:absolute;left:676px;top:241px;width:1px;height:25px;background:#646464"></div>
<div style="position:absolute;left:676px;top:265px;width:112px;height:2px;background:#f2f2f2"></div>
<div style="position:absolute;left:786px;top:241px;width:2px;height:26px;background:#f2f2f2"></div>
<div style="position:absolute;left:674px;top:267px;width:115px;height:1px;background:#6e6e6e"></div>
<div style="position:absolute;left:788px;top:239px;width:1px;height:29px;background:#6e6e6e"></div>
<div class="t" style="left:680.12px;top:247px;font-size:16px;line-height:16px;color:#000;transform:scaleX(0.9790);">10.10</div>
<svg width="1034" height="774" viewBox="0 0 1034 774"><path d="M742.6999999999999 244.5L731.4 260.5H749.9" stroke="#000" stroke-width="1" fill="none"/></svg>
<div class="t" style="left:741.58px;top:247px;font-size:11px;line-height:11px;color:#000;font-weight:bold;transform:scaleX(1.0093);">-1.5</div>
<div class="t" style="left:803.05px;top:223px;font-size:12px;line-height:12px;color:#000;font-weight:bold;transform:scaleX(0.9594);">A1 RMS</div>
<div style="position:absolute;left:802px;top:238px;width:115px;height:29px;background:#d6d6d6;"></div>
<div style="position:absolute;left:802px;top:238px;width:115px;height:2px;background:#d2d2d2"></div>
<div style="position:absolute;left:802px;top:238px;width:2px;height:29px;background:#d2d2d2"></div>
<div style="position:absolute;left:804px;top:240px;width:111px;height:1px;background:#646464"></div>
<div style="position:absolute;left:804px;top:240px;width:1px;height:25px;background:#646464"></div>
<div style="position:absolute;left:804px;top:264px;width:112px;height:2px;background:#f2f2f2"></div>
<div style="position:absolute;left:914px;top:240px;width:2px;height:26px;background:#f2f2f2"></div>
<div style="position:absolute;left:802px;top:266px;width:115px;height:1px;background:#6e6e6e"></div>
<div style="position:absolute;left:916px;top:238px;width:1px;height:29px;background:#6e6e6e"></div>
<div class="t" style="left:806.99px;top:247px;font-size:16px;line-height:16px;color:#000;transform:scaleX(0.9957);">0.94</div>
<svg width="1034" height="774" viewBox="0 0 1034 774"><path d="M868.4999999999999 244.5L857.1999999999999 260.5H875.6999999999999" stroke="#000" stroke-width="1" fill="none"/></svg>
<div class="t" style="left:868.08px;top:248px;font-size:11px;line-height:11px;color:#000;font-weight:bold;transform:scaleX(1.0058);">-81.0</div>
<div class="t" style="left:938.22px;top:224px;font-size:12px;line-height:12px;color:#000;font-weight:bold;transform:scaleX(0.9828);">Ch1 Watts</div>
<div style="position:absolute;left:937px;top:238px;width:66px;height:29px;background:#d6d6d6;"></div>
<div style="position:absolute;left:937px;top:238px;width:66px;height:2px;background:#d2d2d2"></div>
<div style="position:absolute;left:937px;top:238px;width:2px;height:29px;background:#d2d2d2"></div>
<div style="position:absolute;left:939px;top:240px;width:62px;height:1px;background:#646464"></div>
<div style="position:absolute;left:939px;top:240px;width:1px;height:25px;background:#646464"></div>
<div style="position:absolute;left:939px;top:264px;width:63px;height:2px;background:#f2f2f2"></div>
<div style="position:absolute;left:1000px;top:240px;width:2px;height:26px;background:#f2f2f2"></div>
<div style="position:absolute;left:937px;top:266px;width:66px;height:1px;background:#6e6e6e"></div>
<div style="position:absolute;left:1002px;top:238px;width:1px;height:29px;background:#6e6e6e"></div>
<div class="t" style="left:942.62px;top:246px;font-size:16px;line-height:16px;color:#000;transform:scaleX(0.9830);">1.8</div>
<div class="t" style="left:676.37px;top:286px;font-size:12px;line-height:12px;color:#000;font-weight:bold;transform:scaleX(0.9641);">V2 RMS</div>
<div style="position:absolute;left:674px;top:300px;width:115px;height:29px;background:#d6d6d6;"></div>
<div style="position:absolute;left:674px;top:300px;width:115px;height:2px;background:#d2d2d2"></div>
<div style="position:absolute;left:674px;top:300px;width:2px;height:29px;background:#d2d2d2"></div>
<div style="position:absolute;left:676px;top:302px;width:111px;height:1px;background:#646464"></div>
<div style="position:absolute;left:676px;top:302px;width:1px;height:25px;background:#646464"></div>
<div style="position:absolute;left:676px;top:326px;width:112px;height:2px;background:#f2f2f2"></div>
<div style="position:absolute;left:786px;top:302px;width:2px;height:26px;background:#f2f2f2"></div>
<div style="position:absolute;left:674px;top:328px;width:115px;height:1px;background:#6e6e6e"></div>
<div style="position:absolute;left:788px;top:300px;width:1px;height:29px;background:#6e6e6e"></div>
<div class="t" style="left:680.12px;top:308px;font-size:16px;line-height:16px;color:#000;transform:scaleX(0.9758);">10.14</div>
<svg width="1034" height="774" viewBox="0 0 1034 774"><path d="M742.6999999999999 305.5L731.4 321.5H749.9" stroke="#000" stroke-width="1" fill="none"/></svg>
<div class="t" style="left:741.58px;top:308px;font-size:11px;line-height:11px;color:#000;font-weight:bold;transform:scaleX(0.9744);">-241.7</div>
<div class="t" style="left:803.05px;top:285px;font-size:12px;line-height:12px;color:#000;font-weight:bold;transform:scaleX(0.9594);">A2 RMS</div>
<div style="position:absolute;left:802px;top:300px;width:115px;height:29px;background:#d6d6d6;"></div>
<div style="position:absolute;left:802px;top:300px;width:115px;height:2px;background:#d2d2d2"></div>
<div style="position:absolute;left:802px;top:300px;width:2px;height:29px;background:#d2d2d2"></div>
<div style="position:absolute;left:804px;top:302px;width:111px;height:1px;background:#646464"></div>
<div style="position:absolute;left:804px;top:302px;width:1px;height:25px;background:#646464"></div>
<div style="position:absolute;left:804px;top:326px;width:112px;height:2px;background:#f2f2f2"></div>
<div style="position:absolute;left:914px;top:302px;width:2px;height:26px;background:#f2f2f2"></div>
<div style="position:absolute;left:802px;top:328px;width:115px;height:1px;background:#6e6e6e"></div>
<div style="position:absolute;left:916px;top:300px;width:1px;height:29px;background:#6e6e6e"></div>
<div class="t" style="left:806.27px;top:308px;font-size:16px;line-height:16px;color:#000;transform:scaleX(1.0262);">1.39</div>
<svg width="1034" height="774" viewBox="0 0 1034 774"><path d="M868.4999999999999 305.5L857.1999999999999 321.5H875.6999999999999" stroke="#000" stroke-width="1" fill="none"/></svg>
<div class="t" style="left:867.99px;top:309px;font-size:11px;line-height:11px;color:#000;font-weight:bold;transform:scaleX(0.9876);">55.0</div>
<div class="t" style="left:938.22px;top:286px;font-size:12px;line-height:12px;color:#000;font-weight:bold;transform:scaleX(0.9828);">Ch2 Watts</div>
<div style="position:absolute;left:937px;top:300px;width:66px;height:29px;background:#d6d6d6;"></div>
<div style="position:absolute;left:937px;top:300px;width:66px;height:2px;background:#d2d2d2"></div>
<div style="position:absolute;left:937px;top:300px;width:2px;height:29px;background:#d2d2d2"></div>
<div style="position:absolute;left:939px;top:302px;width:62px;height:1px;background:#646464"></div>
<div style="position:absolute;left:939px;top:302px;width:1px;height:25px;background:#646464"></div>
<div style="position:absolute;left:939px;top:326px;width:63px;height:2px;background:#f2f2f2"></div>
<div style="position:absolute;left:1000px;top:302px;width:2px;height:26px;background:#f2f2f2"></div>
<div style="position:absolute;left:937px;top:328px;width:66px;height:1px;background:#6e6e6e"></div>
<div style="position:absolute;left:1002px;top:300px;width:1px;height:29px;background:#6e6e6e"></div>
<div class="t" style="left:942.97px;top:308px;font-size:16px;line-height:16px;color:#000;transform:scaleX(0.9684);">5.9</div>
<div class="t" style="left:676.37px;top:347px;font-size:12px;line-height:12px;color:#000;font-weight:bold;transform:scaleX(0.9641);">V3 RMS</div>
<div style="position:absolute;left:674px;top:361px;width:115px;height:29px;background:#d6d6d6;"></div>
<div style="position:absolute;left:674px;top:361px;width:115px;height:2px;background:#d2d2d2"></div>
<div style="position:absolute;left:674px;top:361px;width:2px;height:29px;background:#d2d2d2"></div>
<div style="position:absolute;left:676px;top:363px;width:111px;height:1px;background:#646464"></div>
<div style="position:absolute;left:676px;top:363px;width:1px;height:25px;background:#646464"></div>
<div style="position:absolute;left:676px;top:387px;width:112px;height:2px;background:#f2f2f2"></div>
<div style="position:absolute;left:786px;top:363px;width:2px;height:26px;background:#f2f2f2"></div>
<div style="position:absolute;left:674px;top:389px;width:115px;height:1px;background:#6e6e6e"></div>
<div style="position:absolute;left:788px;top:361px;width:1px;height:29px;background:#6e6e6e"></div>
<div class="t" style="left:680.12px;top:369px;font-size:16px;line-height:16px;color:#000;transform:scaleX(0.9822);">10.02</div>
<svg width="1034" height="774" viewBox="0 0 1034 774"><path d="M742.6999999999999 366.5L731.4 382.5H749.9" stroke="#000" stroke-width="1" fill="none"/></svg>
<div class="t" style="left:741.58px;top:369px;font-size:11px;line-height:11px;color:#000;font-weight:bold;transform:scaleX(0.9744);">-121.3</div>
<div class="t" style="left:803.05px;top:346px;font-size:12px;line-height:12px;color:#000;font-weight:bold;transform:scaleX(0.9594);">A3 RMS</div>
<div style="position:absolute;left:802px;top:361px;width:115px;height:29px;background:#d6d6d6;"></div>
<div style="position:absolute;left:802px;top:361px;width:115px;height:2px;background:#d2d2d2"></div>
<div style="position:absolute;left:802px;top:361px;width:2px;height:29px;background:#d2d2d2"></div>
<div style="position:absolute;left:804px;top:363px;width:111px;height:1px;background:#646464"></div>
<div style="position:absolute;left:804px;top:363px;width:1px;height:25px;background:#646464"></div>
<div style="position:absolute;left:804px;top:387px;width:112px;height:2px;background:#f2f2f2"></div>
<div style="position:absolute;left:914px;top:363px;width:2px;height:26px;background:#f2f2f2"></div>
<div style="position:absolute;left:802px;top:389px;width:115px;height:1px;background:#6e6e6e"></div>
<div style="position:absolute;left:916px;top:361px;width:1px;height:29px;background:#6e6e6e"></div>
<div class="t" style="left:806.99px;top:369px;font-size:16px;line-height:16px;color:#000;">0.97</div>
<svg width="1034" height="774" viewBox="0 0 1034 774"><path d="M868.4999999999999 366.5L857.1999999999999 382.5H875.6999999999999" stroke="#000" stroke-width="1" fill="none"/></svg>
<div class="t" style="left:868.08px;top:370px;font-size:11px;line-height:11px;color:#000;font-weight:bold;transform:scaleX(0.9896);">-167.2</div>
<div class="t" style="left:938.22px;top:347px;font-size:12px;line-height:12px;color:#000;font-weight:bold;transform:scaleX(0.9828);">Ch3 Watts</div>
<div style="position:absolute;left:937px;top:361px;width:66px;height:29px;background:#d6d6d6;"></div>
<div style="position:absolute;left:937px;top:361px;width:66px;height:2px;background:#d2d2d2"></div>
<div style="position:absolute;left:937px;top:361px;width:2px;height:29px;background:#d2d2d2"></div>
<div style="position:absolute;left:939px;top:363px;width:62px;height:1px;background:#646464"></div>
<div style="position:absolute;left:939px;top:363px;width:1px;height:25px;background:#646464"></div>
<div style="position:absolute;left:939px;top:387px;width:63px;height:2px;background:#f2f2f2"></div>
<div style="position:absolute;left:1000px;top:363px;width:2px;height:26px;background:#f2f2f2"></div>
<div style="position:absolute;left:937px;top:389px;width:66px;height:1px;background:#6e6e6e"></div>
<div style="position:absolute;left:1002px;top:361px;width:1px;height:29px;background:#6e6e6e"></div>
<div class="t" style="left:943.15px;top:369px;font-size:16px;line-height:16px;color:#000;transform:scaleX(0.9598);">6.9</div>
<div class="t" style="left:686.78px;top:404px;font-size:14px;line-height:14px;color:#000;font-weight:bold;transform:scaleX(1.0229);">Avg Volts</div>
<div style="position:absolute;left:686px;top:424px;width:80px;height:29px;background:#d6d6d6;"></div>
<div style="position:absolute;left:686px;top:424px;width:80px;height:2px;background:#d2d2d2"></div>
<div style="position:absolute;left:686px;top:424px;width:2px;height:29px;background:#d2d2d2"></div>
<div style="position:absolute;left:688px;top:426px;width:76px;height:1px;background:#646464"></div>
<div style="position:absolute;left:688px;top:426px;width:1px;height:25px;background:#646464"></div>
<div style="position:absolute;left:688px;top:450px;width:77px;height:2px;background:#f2f2f2"></div>
<div style="position:absolute;left:763px;top:426px;width:2px;height:26px;background:#f2f2f2"></div>
<div style="position:absolute;left:686px;top:452px;width:80px;height:1px;background:#6e6e6e"></div>
<div style="position:absolute;left:765px;top:424px;width:1px;height:29px;background:#6e6e6e"></div>
<div class="t" style="left:691.26px;top:432px;font-size:16px;line-height:16px;color:#000;font-weight:bold;transform:scaleX(1.1227);">10.09</div>
<div class="t" style="left:814.77px;top:402px;font-size:14px;line-height:14px;color:#000;font-weight:bold;transform:scaleX(1.0779);">Avg Amps</div>
<div style="position:absolute;left:817px;top:424px;width:80px;height:29px;background:#d6d6d6;"></div>
<div style="position:absolute;left:817px;top:424px;width:80px;height:2px;background:#d2d2d2"></div>
<div style="position:absolute;left:817px;top:424px;width:2px;height:29px;background:#d2d2d2"></div>
<div style="position:absolute;left:819px;top:426px;width:76px;height:1px;background:#646464"></div>
<div style="position:absolute;left:819px;top:426px;width:1px;height:25px;background:#646464"></div>
<div style="position:absolute;left:819px;top:450px;width:77px;height:2px;background:#f2f2f2"></div>
<div style="position:absolute;left:894px;top:426px;width:2px;height:26px;background:#f2f2f2"></div>
<div style="position:absolute;left:817px;top:452px;width:80px;height:1px;background:#6e6e6e"></div>
<div style="position:absolute;left:896px;top:424px;width:1px;height:29px;background:#6e6e6e"></div>
<div class="t" style="left:822.76px;top:432px;font-size:16px;line-height:16px;color:#000;font-weight:bold;transform:scaleX(1.1273);">1.10</div>
<div class="t" style="left:930.50px;top:404px;font-size:14px;line-height:14px;color:#000;font-weight:bold;transform:scaleX(1.0781);">Tot Power</div>
<div style="position:absolute;left:938px;top:424px;width:65px;height:29px;background:#d6d6d6;"></div>
<div style="position:absolute;left:938px;top:424px;width:65px;height:2px;background:#d2d2d2"></div>
<div style="position:absolute;left:938px;top:424px;width:2px;height:29px;background:#d2d2d2"></div>
<div style="position:absolute;left:940px;top:426px;width:61px;height:1px;background:#646464"></div>
<div style="position:absolute;left:940px;top:426px;width:1px;height:25px;background:#646464"></div>
<div style="position:absolute;left:940px;top:450px;width:62px;height:2px;background:#f2f2f2"></div>
<div style="position:absolute;left:1000px;top:426px;width:2px;height:26px;background:#f2f2f2"></div>
<div style="position:absolute;left:938px;top:452px;width:65px;height:1px;background:#6e6e6e"></div>
<div style="position:absolute;left:1002px;top:424px;width:1px;height:29px;background:#6e6e6e"></div>
<div class="t" style="left:942.76px;top:432px;font-size:16px;line-height:16px;color:#000;font-weight:bold;transform:scaleX(1.1261);">14.6</div>
<div style="position:absolute;left:662px;top:478px;width:362px;height:2px;background:#dcdcdc"></div>
<div style="position:absolute;left:662px;top:478px;width:2px;height:209px;background:#dcdcdc"></div>
<div style="position:absolute;left:664px;top:480px;width:358px;height:1px;background:#5f5f5f"></div>
<div style="position:absolute;left:664px;top:480px;width:1px;height:205px;background:#5f5f5f"></div>
<div style="position:absolute;left:664px;top:685px;width:360px;height:2px;background:#dcdcdc"></div>
<div style="position:absolute;left:1022px;top:480px;width:2px;height:207px;background:#dcdcdc"></div>
<div style="position:absolute;left:662px;top:687px;width:363px;height:1px;background:#5f5f5f"></div>
<div style="position:absolute;left:1024px;top:478px;width:1px;height:210px;background:#5f5f5f"></div>
<div style="position:absolute;left:681px;top:492px;width:122px;height:17px;background:#d2d2d2"></div>
<div class="t" style="left:681.81px;top:495px;font-size:12px;line-height:12px;color:#7d7d7d;font-weight:bold;transform:scaleX(0.9543);">Sampling Period (mS)</div>
<div style="position:absolute;left:683px;top:513px;width:7px;height:20px;background:#d2d2d2"></div>
<div style="position:absolute;left:988px;top:513px;width:7px;height:20px;background:#d2d2d2"></div>
<div style="position:absolute;left:692px;top:514px;width:294px;height:18px;background:#8f8f8f;"></div>
<div style="position:absolute;left:692px;top:514px;width:294px;height:1px;background:#858585"></div>
<div style="position:absolute;left:692px;top:514px;width:1px;height:18px;background:#858585"></div>
<div style="position:absolute;left:692px;top:531px;width:294px;height:1px;background:#b9b9b9"></div>
<div style="position:absolute;left:985px;top:514px;width:1px;height:18px;background:#b9b9b9"></div>
<div style="position:absolute;left:690px;top:514px;width:2px;height:18px;background:#acacac"></div>
<div style="position:absolute;left:683px;top:536px;width:317px;height:21px;background:#d2d2d2"></div>
<svg width="1034" height="774" viewBox="0 0 1034 774"><polygon points="684.2,523.0 689.5,514.5 689.5,531.5" fill="#c2c2c2"/><path d="M684.2 523.0L689.2 531.5" stroke="#6e6e6e" stroke-width="0.9" stroke-dasharray="1.6 0.9" fill="none"/><path d="M689.5 514V532" stroke="#8c8c8c" stroke-width="1" fill="none"/><path d="M684.2 523.0L689.2 514.5" stroke="#e4e4e4" stroke-width="0.8" fill="none"/><polygon points="994.7,523.0 989,515.5 989,532" fill="#c6c6c6"/><path d="M994.7 523.0L988.8 532.2" stroke="#5e5e5e" stroke-width="0.9" stroke-dasharray="1.6 0.7" fill="none"/><path d="M988.7 514V532" stroke="#e8e8e8" stroke-width="1" fill="none"/><path d="M994.7 523.0L989 515.5" stroke="#dedede" stroke-width="0.8" fill="none"/></svg>
<svg width="1034" height="774" viewBox="0 0 1034 774" shape-rendering="crispEdges"><path d="M693.5 536v5M713.5 536v2.6M725.5 536v2.6M734.5 536v2.6M740.5 536v2.6M745.5 536v2.6M750.5 536v2.6M754.5 536v2.6M757.5 536v2.6M761.5 536v5M781.5 536v2.6M793.5 536v2.6M801.5 536v2.6M808.5 536v2.6M813.5 536v2.6M818.5 536v2.6M822.5 536v2.6M825.5 536v2.6M828.5 536v5M849.5 536v2.6M861.5 536v2.6M869.5 536v2.6M876.5 536v2.6M881.5 536v2.6M885.5 536v2.6M889.5 536v2.6M893.5 536v2.6M896.5 536v5M916.5 536v2.6M928.5 536v2.6M937.5 536v2.6M943.5 536v2.6M949.5 536v2.6M953.5 536v2.6M957.5 536v2.6M961.5 536v2.6M964.5 536v5M984.5 536v5" stroke="#7d7d7d" stroke-width="1" fill="none"/></svg>
<div class="t" style="left:684.26px;top:543px;font-size:12px;line-height:12px;color:#7d7d7d;font-weight:bold;transform:scaleX(0.9373);">0.1</div>
<div class="t" style="left:757.01px;top:543px;font-size:12px;line-height:12px;color:#7d7d7d;font-weight:bold;transform:scaleX(1.0447);">1</div>
<div class="t" style="left:821.42px;top:543px;font-size:12px;line-height:12px;color:#7d7d7d;font-weight:bold;transform:scaleX(1.0225);">10</div>
<div class="t" style="left:885.82px;top:543px;font-size:12px;line-height:12px;color:#7d7d7d;font-weight:bold;transform:scaleX(1.0217);">100</div>
<div class="t" style="left:970.25px;top:543px;font-size:12px;line-height:12px;color:#7d7d7d;font-weight:bold;transform:scaleX(1.0450);">2000</div>
<div style="position:absolute;left:891px;top:511px;width:10px;height:24px;background:#93c5f8;"></div>
<div style="position:absolute;left:895px;top:511px;width:1px;height:24px;background:#d8ecff;"></div>
<div style="position:absolute;left:896px;top:511px;width:1px;height:24px;background:#74aee6;"></div>
<div class="t" style="left:688.88px;top:578px;font-size:12px;line-height:12px;color:#000;font-weight:bold;transform:scaleX(0.9602);">Filter</div>
<div style="position:absolute;left:679px;top:594px;width:57px;height:26px;background:#000"></div>
<div style="position:absolute;left:680px;top:595px;width:55px;height:24px;background:#b8b8b8"></div>
<div style="position:absolute;left:680px;top:595px;width:54px;height:2px;background:#e8e8e8"></div>
<div style="position:absolute;left:680px;top:595px;width:2px;height:23px;background:#e8e8e8"></div>
<div style="position:absolute;left:681px;top:617px;width:54px;height:2px;background:#606060"></div>
<div style="position:absolute;left:733px;top:596px;width:2px;height:23px;background:#606060"></div>
<div class="t" style="left:695.94px;top:602px;font-size:12px;line-height:12px;color:#000;font-weight:bold;transform:scaleX(0.8851);">OFF</div>
<div style="position:absolute;left:762px;top:570px;width:126px;height:17px;background:#d2d2d2"></div>
<div class="t" style="left:763.32px;top:573px;font-size:12px;line-height:12px;color:#7d7d7d;font-weight:bold;transform:scaleX(0.9798);">Cutoff Frequency (Hz)</div>
<div style="position:absolute;left:867px;top:589px;width:13px;height:34px;background:#d2d2d2"></div>
<div style="position:absolute;left:753px;top:595px;width:7px;height:21px;background:#d2d2d2"></div>
<div style="position:absolute;left:991px;top:595px;width:7px;height:21px;background:#d2d2d2"></div>
<div style="position:absolute;left:762px;top:596px;width:227px;height:19px;background:#8f8f8f;"></div>
<div style="position:absolute;left:762px;top:596px;width:227px;height:1px;background:#858585"></div>
<div style="position:absolute;left:762px;top:596px;width:1px;height:19px;background:#858585"></div>
<div style="position:absolute;left:762px;top:614px;width:227px;height:1px;background:#b9b9b9"></div>
<div style="position:absolute;left:988px;top:596px;width:1px;height:19px;background:#b9b9b9"></div>
<div style="position:absolute;left:760px;top:596px;width:2px;height:19px;background:#acacac"></div>
<div style="position:absolute;left:751px;top:622px;width:259px;height:21px;background:#d2d2d2"></div>
<svg width="1034" height="774" viewBox="0 0 1034 774"><polygon points="754.2,605.5 759.5,596.5 759.5,614.5" fill="#c2c2c2"/><path d="M754.2 605.5L759.2 614.5" stroke="#6e6e6e" stroke-width="0.9" stroke-dasharray="1.6 0.9" fill="none"/><path d="M759.5 596V615" stroke="#8c8c8c" stroke-width="1" fill="none"/><path d="M754.2 605.5L759.2 596.5" stroke="#e4e4e4" stroke-width="0.8" fill="none"/><polygon points="997.7,605.5 992,597.5 992,615" fill="#c6c6c6"/><path d="M997.7 605.5L991.8 615.2" stroke="#5e5e5e" stroke-width="0.9" stroke-dasharray="1.6 0.7" fill="none"/><path d="M991.7 596V615" stroke="#e8e8e8" stroke-width="1" fill="none"/><path d="M997.7 605.5L992 597.5" stroke="#dedede" stroke-width="0.8" fill="none"/></svg>
<svg width="1034" height="774" viewBox="0 0 1034 774" shape-rendering="crispEdges"><path d="M763.5 622v5M785.5 622v2.6M798.5 622v2.6M808.5 622v2.6M815.5 622v2.6M821.5 622v2.6M826.5 622v2.6M830.5 622v2.6M834.5 622v2.6M838.5 622v5M860.5 622v2.6M873.5 622v2.6M882.5 622v2.6M890.5 622v2.6M896.5 622v2.6M901.5 622v2.6M905.5 622v2.6M909.5 622v2.6M912.5 622v5M935.5 622v2.6M948.5 622v2.6M957.5 622v2.6M964.5 622v2.6M970.5 622v2.6M975.5 622v2.6M980.5 622v2.6M983.5 622v2.6M987.5 622v5" stroke="#7d7d7d" stroke-width="1" fill="none"/></svg>
<div class="t" style="left:752.83px;top:629px;font-size:12px;line-height:12px;color:#7d7d7d;font-weight:bold;transform:scaleX(1.0062);">100</div>
<div class="t" style="left:824.87px;top:629px;font-size:12px;line-height:12px;color:#7d7d7d;font-weight:bold;transform:scaleX(1.0130);">1000</div>
<div class="t" style="left:896.12px;top:629px;font-size:12px;line-height:12px;color:#7d7d7d;font-weight:bold;transform:scaleX(1.0149);">10000</div>
<div class="t" style="left:967.47px;top:629px;font-size:12px;line-height:12px;color:#7d7d7d;font-weight:bold;transform:scaleX(1.0183);">100000</div>
<svg width="1034" height="774" viewBox="0 0 1034 774"><polygon points="867.4,589.4 879.8,589.4 874.3,621.5 873,621.5" fill="#8ec2f8"/><path d="M867.4 589.4H879.8" stroke="#b8dcff" stroke-width="1"/></svg>
<div style="position:absolute;left:9px;top:692px;width:1015px;height:2px;background:#dcdcdc"></div>
<div style="position:absolute;left:9px;top:692px;width:2px;height:73px;background:#dcdcdc"></div>
<div style="position:absolute;left:11px;top:694px;width:1011px;height:1px;background:#5f5f5f"></div>
<div style="position:absolute;left:11px;top:694px;width:1px;height:69px;background:#5f5f5f"></div>
<div style="position:absolute;left:11px;top:763px;width:1013px;height:2px;background:#dcdcdc"></div>
<div style="position:absolute;left:1022px;top:694px;width:2px;height:71px;background:#dcdcdc"></div>
<div style="position:absolute;left:9px;top:765px;width:1016px;height:1px;background:#5f5f5f"></div>
<div style="position:absolute;left:1024px;top:692px;width:1px;height:74px;background:#5f5f5f"></div>
<div style="position:absolute;left:127px;top:705px;width:79px;height:41px;background:#000"></div>
<div style="position:absolute;left:128px;top:706px;width:77px;height:39px;background:#b3b3b3"></div>
<div style="position:absolute;left:128px;top:706px;width:77px;height:2px;background:#5a5a5a"></div>
<div style="position:absolute;left:128px;top:706px;width:2px;height:39px;background:#5a5a5a"></div>
<div style="position:absolute;left:130px;top:743px;width:75px;height:2px;background:#e8e8e8"></div>
<div style="position:absolute;left:203px;top:708px;width:2px;height:37px;background:#e8e8e8"></div>
<div class="t" style="left:147.79px;top:720px;font-size:13px;line-height:13px;color:#ff0000;font-weight:bold;transform:scaleX(0.9623);">Pause</div>
<div style="position:absolute;left:244px;top:705px;width:81px;height:41px;background:#000"></div>
<div style="position:absolute;left:245px;top:706px;width:79px;height:39px;background:#b8b8b8"></div>
<div style="position:absolute;left:245px;top:706px;width:78px;height:2px;background:#ececec"></div>
<div style="position:absolute;left:245px;top:706px;width:2px;height:38px;background:#ececec"></div>
<div style="position:absolute;left:246px;top:743px;width:78px;height:2px;background:#5a5a5a"></div>
<div style="position:absolute;left:322px;top:707px;width:2px;height:38px;background:#5a5a5a"></div>
<div class="t" style="left:270.72px;top:714px;font-size:11px;line-height:11px;color:#000;font-weight:bold;transform:scaleX(0.9586);">Save</div>
<div class="t" style="left:270.93px;top:727px;font-size:11px;line-height:11px;color:#000;font-weight:bold;transform:scaleX(0.9912);">Data</div>
<div style="position:absolute;left:370px;top:708px;width:183px;height:20px;background:#333"></div>
<svg width="1034" height="774" viewBox="0 0 1034 774"><polygon points="363.5,718.5 370,707.5 370,729.5" fill="#8a8a8a"/><path d="M363.5 718.5L370 707.5" stroke="#cfcfcf" stroke-width="1"/><path d="M363.5 718.5L370 729.5" stroke="#222" stroke-width="1"/><rect x="553" y="708" width="2.5" height="20" fill="#c6c6c6"/><polygon points="555.5,707 562.5,718.5 555.5,730" fill="#8a8a8a"/><path d="M556 707V729" stroke="#e6e6e6" stroke-width="1.2"/><path d="M555.5 707L562.5 718.5" stroke="#d4d4d4" stroke-width="1"/><path d="M562.5 718.5L555.5 730" stroke="#1a1a1a" stroke-width="1"/></svg>
<div style="position:absolute;left:369px;top:705px;width:8px;height:27px;background:#3f9ff6"></div>
<div style="position:absolute;left:369px;top:705px;width:8px;height:1px;background:#8ccaff"></div>
<div style="position:absolute;left:369px;top:705px;width:1px;height:27px;background:#74bcff"></div>
<div style="position:absolute;left:372px;top:705px;width:1px;height:27px;background:#a8d6ff"></div>
<div style="position:absolute;left:373px;top:705px;width:1px;height:27px;background:#2565a8"></div>
<div style="position:absolute;left:369px;top:731px;width:8px;height:1px;background:#2c7fd0"></div>
<svg width="1034" height="774" viewBox="0 0 1034 774" shape-rendering="crispEdges"><path d="M373.5 733v5M378.5 733v2.5M387.5 733v2.5M396.5 733v2.5M405.5 733v2.5M414.5 733v5M423.5 733v2.5M432.5 733v2.5M441.5 733v2.5M451.5 733v2.5M460.5 733v5M469.5 733v2.5M478.5 733v2.5M487.5 733v2.5M496.5 733v2.5M505.5 733v5M514.5 733v2.5M524.5 733v2.5M533.5 733v2.5M542.5 733v2.5M551.5 733v5" stroke="#000" stroke-width="1" fill="none"/></svg>
<div class="t" style="left:369.98px;top:740px;font-size:12px;line-height:12px;color:#000;">1</div>
<div class="t" style="left:408.40px;top:740px;font-size:12px;line-height:12px;color:#000;transform:scaleX(0.8905);">10</div>
<div class="t" style="left:454.32px;top:740px;font-size:12px;line-height:12px;color:#000;transform:scaleX(0.8690);">20</div>
<div class="t" style="left:499.91px;top:740px;font-size:12px;line-height:12px;color:#000;transform:scaleX(0.8732);">30</div>
<div class="t" style="left:545.82px;top:740px;font-size:12px;line-height:12px;color:#000;transform:scaleX(0.8525);">40</div>
<div class="t" style="left:571.94px;top:711px;font-size:11px;line-height:11px;color:#000;font-weight:bold;transform:scaleX(1.0361);">Zoom</div>
<div style="position:absolute;left:653px;top:708px;width:193px;height:17px;background:#333"></div>
<svg width="1034" height="774" viewBox="0 0 1034 774"><polygon points="646.5,717.0 653,707.5 653,726.5" fill="#8a8a8a"/><path d="M646.5 717.0L653 707.5" stroke="#cfcfcf" stroke-width="1"/><path d="M646.5 717.0L653 726.5" stroke="#222" stroke-width="1"/><rect x="846" y="708" width="2.5" height="17" fill="#c6c6c6"/><polygon points="848.5,707 855.5,717.0 848.5,727" fill="#8a8a8a"/><path d="M849 707V726" stroke="#e6e6e6" stroke-width="1.2"/><path d="M848.5 707L855.5 717.0" stroke="#d4d4d4" stroke-width="1"/><path d="M855.5 717.0L848.5 727" stroke="#1a1a1a" stroke-width="1"/></svg>
<div style="position:absolute;left:652px;top:705px;width:8px;height:24px;background:#3f9ff6"></div>
<div style="position:absolute;left:652px;top:705px;width:8px;height:1px;background:#8ccaff"></div>
<div style="position:absolute;left:652px;top:705px;width:1px;height:24px;background:#74bcff"></div>
<div style="position:absolute;left:655px;top:705px;width:1px;height:24px;background:#a8d6ff"></div>
<div style="position:absolute;left:656px;top:705px;width:1px;height:24px;background:#2565a8"></div>
<div style="position:absolute;left:652px;top:728px;width:8px;height:1px;background:#2c7fd0"></div>
<svg width="1034" height="774" viewBox="0 0 1034 774" shape-rendering="crispEdges"><path d="M656.5 730v5M665.5 730v2.5M675.5 730v2.5M684.5 730v2.5M694.5 730v5M703.5 730v2.5M713.5 730v2.5M722.5 730v2.5M731.5 730v5M741.5 730v2.5M750.5 730v2.5M760.5 730v2.5M769.5 730v5M779.5 730v2.5M788.5 730v2.5M797.5 730v2.5M807.5 730v5M816.5 730v2.5M826.5 730v2.5M835.5 730v2.5M844.5 730v5" stroke="#000" stroke-width="1" fill="none"/></svg>
<div class="t" style="left:653.13px;top:737px;font-size:12px;line-height:12px;color:#000;">0</div>
<div class="t" style="left:686.81px;top:737px;font-size:12px;line-height:12px;color:#000;transform:scaleX(0.8893);">0.2</div>
<div class="t" style="left:724.51px;top:737px;font-size:12px;line-height:12px;color:#000;transform:scaleX(0.8741);">0.4</div>
<div class="t" style="left:762.21px;top:737px;font-size:12px;line-height:12px;color:#000;transform:scaleX(0.8893);">0.6</div>
<div class="t" style="left:799.91px;top:737px;font-size:12px;line-height:12px;color:#000;transform:scaleX(0.8876);">0.8</div>
<div class="t" style="left:841.48px;top:737px;font-size:12px;line-height:12px;color:#000;">1</div>
<div class="t" style="left:861.03px;top:711px;font-size:11px;line-height:11px;color:#000;font-weight:bold;transform:scaleX(0.9859);">Position</div>
</div></body></html>
